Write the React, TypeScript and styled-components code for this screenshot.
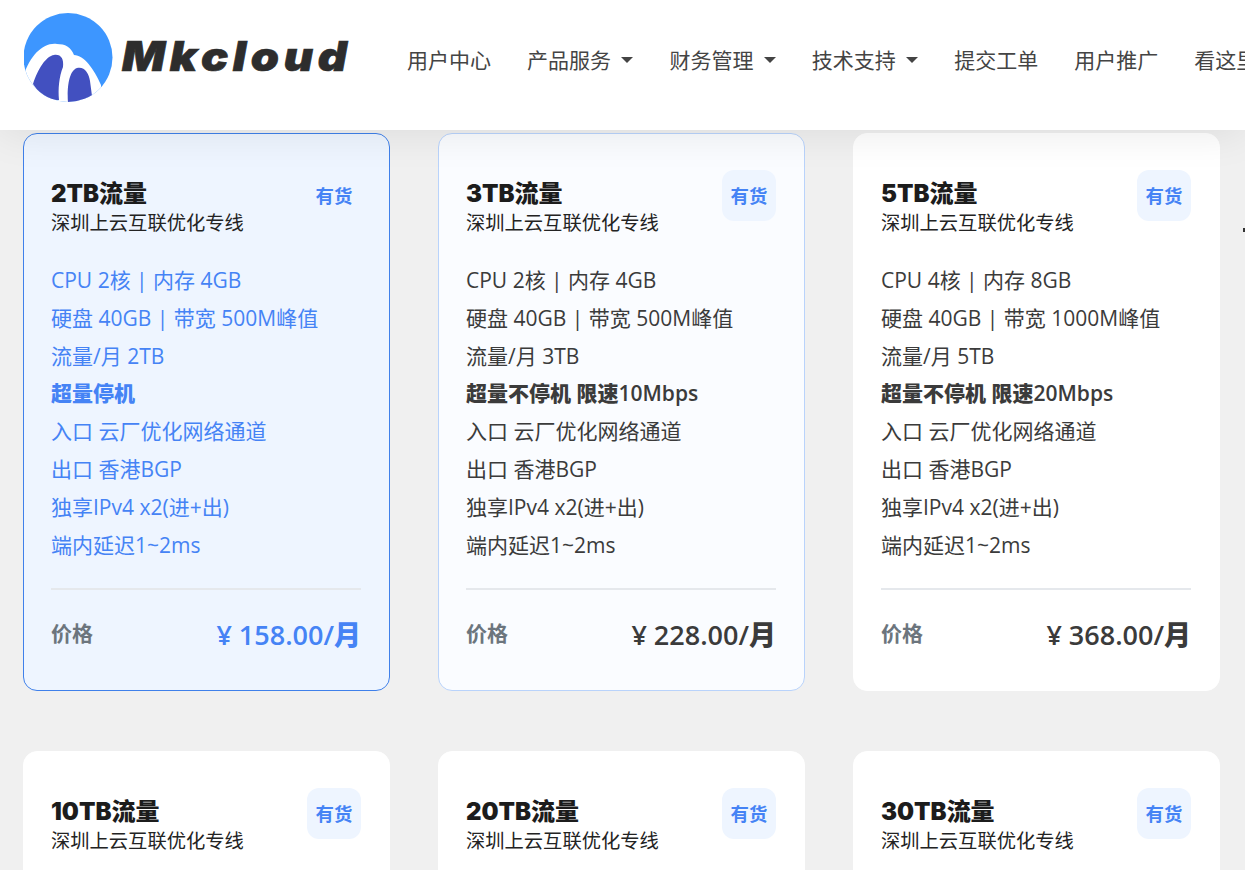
import React from "react";
import styled, { createGlobalStyle } from "styled-components";

const Global = createGlobalStyle`
  html, body { margin: 0; padding: 0; height: 870px; overflow: hidden; background: #f0f0f0; }
  * { box-sizing: border-box; }
  body { font-family: "Open Sans", "Noto Sans CJK SC", sans-serif; }
`;

const Page = styled.div`
  width: 1245px;
  height: 870px;
  overflow: hidden;
  position: relative;
  background: #f0f0f0;
`;

const Header = styled.header`
  position: relative;
  z-index: 2;
  height: 130px;
  background: #fff;
  box-shadow: 0 2px 40px rgba(0, 0, 0, 0.09);
  display: flex;
  align-items: flex-start;
  overflow: hidden;
  white-space: nowrap;
`;

const Logo = styled.div`
  display: flex;
  align-items: flex-start;
  flex: none;
  width: 407px;
  padding: 13px 0 0 24px;
`;

const Wordmark = styled.span`
  display: inline-block;
  transform: scaleX(1.1);
  transform-origin: left center;
  font-family: "Inter", sans-serif;
  font-weight: 900;
  font-style: italic;
  font-size: 41px;
  line-height: 50px;
  letter-spacing: 4.3px;
  color: #2d2d2d;
  -webkit-text-stroke: 0.7px #2d2d2d;
  margin: 18px 0 0 8px;
`;

const Nav = styled.nav`
  display: flex;
  gap: 36px;
  padding-top: 42px;
  flex: none;
`;

const NavItem = styled.a`
  display: flex;
  align-items: center;
  font-size: 21px;
  line-height: 34px;
  color: #444;
  font-family: "Noto Sans CJK SC", "Noto Sans", sans-serif;
  font-weight: 400;
`;

const Caret = styled.i`
  width: 0;
  height: 0;
  margin-left: 10.4px;
  margin-top: 2px;
  border-left: 6px solid transparent;
  border-right: 6px solid transparent;
  border-top: 6px solid #444;
`;

const Grid = styled.main`
  display: grid;
  grid-template-columns: repeat(3, 367px);
  column-gap: 48px;
  row-gap: 60px;
  padding: 3px 0 0 23px;
`;

const EdgeMark = styled.i`
  position: absolute;
  right: 0;
  top: 228px;
  width: 2px;
  height: 4px;
  background: #333;
`;

const Card = styled.section<{ $tone: "active" | "hover" | "plain" }>`
  height: 558px;
  border-radius: 14px;
  padding: 36px 28px 0 27px;
  border: 1px solid
    ${(p) => (p.$tone === "active" ? "#3f80ea" : p.$tone === "hover" ? "#b9d3fb" : "#fff")};
  background: ${(p) =>
    p.$tone === "active" ? "#eef5ff" : p.$tone === "hover" ? "#fafcff" : "#fff"};
  color: ${(p) => (p.$tone === "active" ? "#4583f5" : "#3b3b3b")};
`;

const CardHead = styled.div`
  display: flex;
  justify-content: space-between;
  align-items: flex-start;
  height: 68px;
`;

const Title = styled.h3`
  margin: 8px 0 0;
  font-family: "Inter", "Noto Sans CJK SC", sans-serif;
  font-weight: 900;
  font-size: 24px;
  line-height: 31px;
  color: #1c1c1c;
`;

const Subtitle = styled.p`
  margin: 0;
  font-family: "Noto Sans CJK SC", sans-serif;
  font-size: 19.3px;
  line-height: 26px;
  color: #232323;
`;

const Badge = styled.span<{ $flat?: boolean }>`
  width: 54px;
  height: 51px;
  padding-bottom: 2px;
  border-radius: 12px;
  background: ${(p) => (p.$flat ? "transparent" : "#eef5ff")};
  color: #4583f5;
  font-family: "Noto Sans CJK SC", sans-serif;
  font-weight: 700;
  font-size: 18.4px;
  display: flex;
  align-items: center;
  justify-content: center;
`;

const Specs = styled.ul`
  list-style: none;
  margin: 24px 0 0;
  padding: 0;
  height: 328px;
  border-bottom: 2px solid #e5e8ec;
`;

const Spec = styled.li<{ $strong?: boolean }>`
  font-size: 21px;
  line-height: 37.8px;
  font-family: "Open Sans", "Noto Sans CJK SC", sans-serif;
  font-weight: ${(p) => (p.$strong ? 600 : 400)};
  white-space: nowrap;
  b { font-weight: 800; }
`;

const PriceRow = styled.div`
  display: flex;
  justify-content: space-between;
  align-items: center;
  height: 86px;
`;

const PriceLabel = styled.span`
  font-family: "Noto Sans CJK SC", sans-serif;
  font-weight: 700;
  font-size: 21px;
  color: #6c757d;
  padding-bottom: 2px;
`;

const Price = styled.span`
  font-family: "Open Sans", "Noto Sans CJK SC", sans-serif;
  font-weight: 600;
  font-size: 27px;
  b { font-weight: 800; }
`;

type Plan = {
  title: string;
  cpu: string;
  mem: string;
  band: string;
  flow: string;
  stop: React.ReactNode;
  price: string;
  tone: "active" | "hover" | "plain";
};

const plans: Plan[] = [
  { title: "2TB流量", cpu: "2核", mem: "4GB", band: "500M", flow: "2TB", stop: <b>超量停机</b>, price: "158.00", tone: "active" },
  { title: "3TB流量", cpu: "2核", mem: "4GB", band: "500M", flow: "3TB", stop: <><b>超量不停机 限速</b>10Mbps</>, price: "228.00", tone: "hover" },
  { title: "5TB流量", cpu: "4核", mem: "8GB", band: "1000M", flow: "5TB", stop: <><b>超量不停机 限速</b>20Mbps</>, price: "368.00", tone: "plain" },
  { title: "10TB流量", cpu: "4核", mem: "8GB", band: "1000M", flow: "10TB", stop: <><b>超量不停机 限速</b>20Mbps</>, price: "568.00", tone: "plain" },
  { title: "20TB流量", cpu: "4核", mem: "8GB", band: "1000M", flow: "20TB", stop: <><b>超量不停机 限速</b>20Mbps</>, price: "968.00", tone: "plain" },
  { title: "30TB流量", cpu: "4核", mem: "8GB", band: "1000M", flow: "30TB", stop: <><b>超量不停机 限速</b>20Mbps</>, price: "1368.00", tone: "plain" },
];

const navItems: { label: string; caret?: boolean }[] = [
  { label: "用户中心" },
  { label: "产品服务", caret: true },
  { label: "财务管理", caret: true },
  { label: "技术支持", caret: true },
  { label: "提交工单" },
  { label: "用户推广" },
  { label: "看这里" },
];

const LogoMark = () => (
  <svg width="90" height="90" viewBox="0 0 90 90" style={{ flex: "none" }}>
    <defs>
      <clipPath id="disc">
        <circle cx="44" cy="44.5" r="44.5" />
      </clipPath>
    </defs>
    <g clipPath="url(#disc)">
      <rect width="90" height="90" fill="#3d96ff" />
      <path d="M0 62 C6 42 20 29 33 31 C41 31 47 34 50 42 C60 42 70 56 77 72 L77 90 L0 90 Z" fill="#fff" />
      <path d="M9 71 C14 56 22 43 30 42 C37 41 40 46 39 54 C35 64 34 76 35 87 L20 87 Z" fill="#4250c0" />
      <path d="M44 90 C43 78 44 58 53 55 C60 53 65 60 66 68 L68 83 C62 87 52 90 44 90 Z" fill="#4250c0" />
    </g>
  </svg>
);

export default function App() {
  return (
    <Page>
      <Global />
      <Header>
        <Logo>
          <LogoMark />
          <Wordmark>Mkcloud</Wordmark>
        </Logo>
        <Nav>
          {navItems.map((n) => (
            <NavItem key={n.label}>
              {n.label}
              {n.caret && <Caret />}
            </NavItem>
          ))}
        </Nav>
      </Header>
      <Grid>
        {plans.map((p) => (
          <Card key={p.title} $tone={p.tone}>
            <CardHead>
              <div>
                <Title>{p.title}</Title>
                <Subtitle>深圳上云互联优化专线</Subtitle>
              </div>
              <Badge $flat={p.tone === "active"}>有货</Badge>
            </CardHead>
            <Specs>
              <Spec>CPU {p.cpu} | 内存 {p.mem}</Spec>
              <Spec>硬盘 40GB | 带宽 {p.band}峰值</Spec>
              <Spec>流量/月 {p.flow}</Spec>
              <Spec $strong>{p.stop}</Spec>
              <Spec>入口 云厂优化网络通道</Spec>
              <Spec>出口 香港BGP</Spec>
              <Spec>独享IPv4 x2(进+出)</Spec>
              <Spec>端内延迟1~2ms</Spec>
            </Specs>
            <PriceRow>
              <PriceLabel>价格</PriceLabel>
              <Price>¥ {p.price}/<b>月</b></Price>
            </PriceRow>
          </Card>
        ))}
      </Grid>
      <EdgeMark />
    </Page>
  );
}
